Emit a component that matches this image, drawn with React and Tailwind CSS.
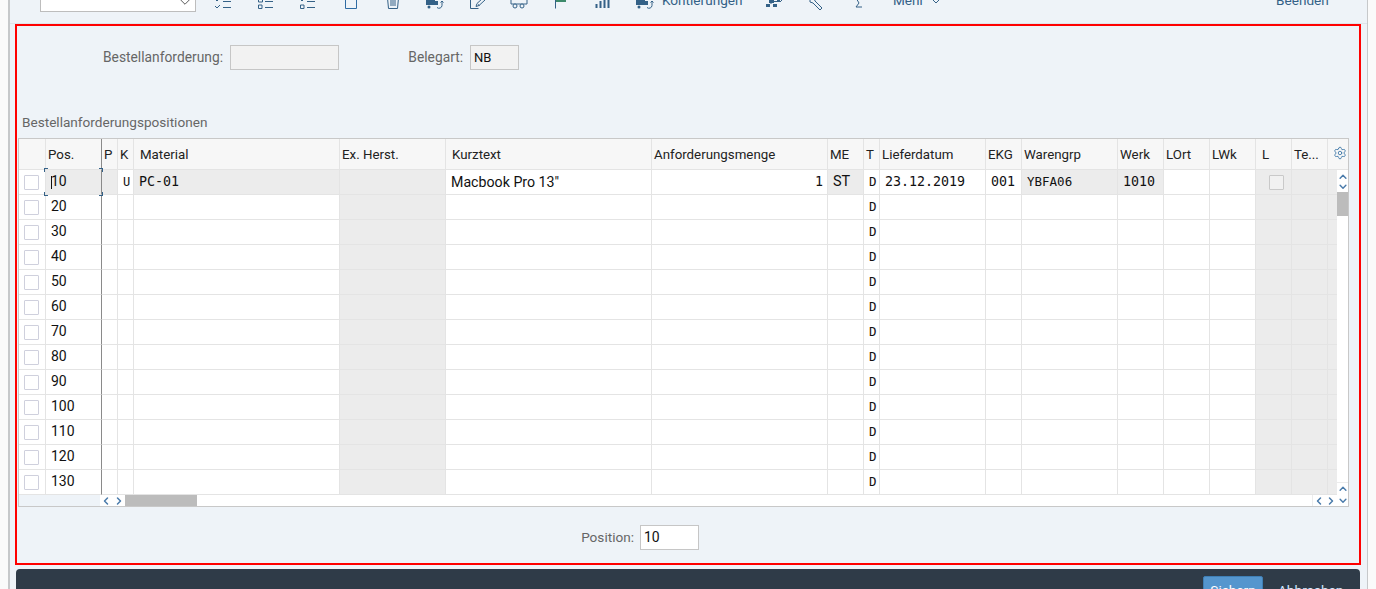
import React from 'react';
import { ChevronDown, ChevronUp, ChevronLeft, ChevronRight, Settings } from 'lucide-react';

const gridCols =
  'grid grid-cols-[27px_56px_16px_16px_206px_106px_206px_176px_36px_16px_106px_36px_96px_46px_46px_46px_36px_36px_20px]';

const headers = [
  { label: '', cls: '' },
  { label: 'Pos.', cls: 'pl-[2px] !border-r-[#8a8a8a]' },
  { label: 'P', cls: 'pl-[2px]' },
  { label: 'K', cls: 'pl-[2px]' },
  { label: 'Material', cls: 'pl-[6px]' },
  { label: 'Ex. Herst.', cls: 'pl-[2px]' },
  { label: 'Kurztext', cls: 'pl-[6px]' },
  { label: 'Anforderungsmenge', cls: 'pl-[2px]' },
  { label: 'ME', cls: 'pl-[2px]' },
  { label: 'T', cls: 'pl-[2px]' },
  { label: 'Lieferdatum', cls: 'pl-[2px]' },
  { label: 'EKG', cls: 'pl-[2px]' },
  { label: 'Warengrp', cls: 'pl-[2px]' },
  { label: 'Werk', cls: 'pl-[2px]' },
  { label: 'LOrt', cls: 'pl-[2px]' },
  { label: 'LWk', cls: 'pl-[2px]' },
  { label: 'L', cls: 'pl-[6px]' },
  { label: 'Te...', cls: 'pl-[2px]' },
];

const positions = [10, 20, 30, 40, 50, 60, 70, 80, 90, 100, 110, 120, 130];

const mono = "font-['DejaVu_Sans_Mono','Liberation_Mono',monospace]";

// icons are cut off by the top of the window, coords are page y
const Icon = ({ children }) => (
  <div className="w-[42px] h-[24px] flex justify-center shrink-0">
    <svg width="24" height="14" viewBox="0 0 24 14" fill="none" stroke="#346187" strokeWidth="1">
      {children}
    </svg>
  </div>
);

const Truck = () => (
  <>
    <rect x="3" y="-3" width="9" height="8" fill="#346187" stroke="none" />
    <rect x="12" y="1" width="3" height="4" fill="#346187" stroke="none" />
    <circle cx="6" cy="7" r="1.500" fill="#346187" stroke="none" />
    <path d="M14 7.500a3 3 0 0 0 5 -2V1M17.500 2.500L19 1l1.500 1.500" />
  </>
);

const CheckBox = ({ disabled }) => (
  <span
    className={`block w-[15px] h-[15px] border rounded-[1px] ${
      disabled ? 'border-[#c9c9c9] bg-[#f1f1f1]' : 'border-[#cfd0dd] bg-white'
    }`}
  />
);

const Row = ({ pos, index }) => {
  const first = index === 0;
  const gray = 'bg-[#ececec]';
  const cell = 'h-[25px] border-r border-b border-[#e4e4e4] flex items-center pl-[5px] overflow-hidden whitespace-nowrap';
  return (
    <div className={gridCols}>
      <div className={`${cell} bg-white`}>
        <CheckBox />
      </div>
      <div className={`${cell} !border-r-[#8a8a8a] text-[14px] pb-[2px] ${first ? gray : 'bg-white'}`}>{pos}</div>
      <div className={`${cell} ${first ? gray : 'bg-white'}`} />
      <div className={`${cell} bg-white ${mono} text-[12px]`}>{first ? 'U' : ''}</div>
      <div className={`${cell} ${mono} text-[13.3px] ${first ? gray : 'bg-white'}`}>{first ? 'PC-01' : ''}</div>
      <div className={`${cell} ${gray}`} />
      <div className={`${cell} bg-white text-[14.2px] pt-[1px]`}>{first ? 'Macbook Pro 13"' : ''}</div>
      <div className={`${cell} bg-white justify-end pr-[4px] ${mono} text-[13.3px]`}>{first ? '1' : ''}</div>
      <div className={`${cell} text-[14.500px] ${first ? gray : 'bg-white'}`}>{first ? 'ST' : ''}</div>
      <div className={`${cell} bg-white ${mono} text-[12.5px]`}>D</div>
      <div className={`${cell} bg-white ${mono} text-[13.3px]`}>{first ? '23.12.2019' : ''}</div>
      <div className={`${cell} bg-white ${mono} text-[13.3px]`}>{first ? '001' : ''}</div>
      <div className={`${cell} ${mono} text-[12.5px] ${first ? gray : 'bg-white'}`}>{first ? 'YBFA06' : ''}</div>
      <div className={`${cell} ${mono} text-[13.3px] ${first ? gray : 'bg-white'}`}>{first ? '1010' : ''}</div>
      <div className={`${cell} bg-white`} />
      <div className={`${cell} bg-white`} />
      <div className={`${cell} ${gray} justify-center`}>{first && <CheckBox disabled />}</div>
      <div className={`${cell} ${gray}`} />
      <div className={`${cell} ${gray} border-r-0`} />
    </div>
  );
};

const App = () => {
  return (
    <div className="h-[589px] overflow-hidden bg-[#fafafa] font-['Roboto',sans-serif] text-[13.6px] text-[#111]">
      <div className="ml-[8px] w-[1360px] h-full border-l-2 border-r border-[#c6c8ca] bg-[#eef3f8] flex flex-col">
        {/* Toolbar, scrolled partly out of view */}
        <div className="h-[24px] shrink-0 overflow-hidden flex items-start text-[#346187] border-b border-[#dfe5eb]">
          <div className="ml-[30px] mr-[8px] w-[156px] h-[12px] shrink-0 bg-white border border-t-0 border-[#bdbdbd] flex justify-end items-end pr-[1px]">
            <ChevronDown size={18} className="text-[#555] shrink-0" strokeWidth={1.3} />
          </div>
          <Icon>
            <path d="M2 -1l2 2 3-3M2 6l2 2 3-3M10 1.500h8M10 7.500h8" />
          </Icon>
          <Icon>
            <path d="M3.500 -2h4v4h-4zM3.500 5h3.500v3.500h-3.500zM10 1.500h8M10 7.500h8" />
          </Icon>
          <Icon>
            <path d="M3 -1l2 2 3-3M3.500 5h3.500v3.500h-3.500zM10 1.500h8M10 7.500h8" />
          </Icon>
          <Icon>
            <path d="M6.500 -2v10.500h11V-2" stroke="#2f6ba3" />
          </Icon>
          <Icon>
            <path d="M6.500 -2l1 10.500h9l1-10.500M10 -2v8M12 -2v8M14 -2v8" />
          </Icon>
          <Icon>
            <Truck />
          </Icon>
          <Icon>
            <path d="M5.500 0v8.500h8M11 6.500l1-3L18-2l2 2-6 5.500z" />
            <path d="M13 4.500l1.500 1" />
          </Icon>
          <Icon>
            <path d="M4 -3h16v7H4z" />
            <circle cx="8" cy="6" r="2" fill="#eef3f8" />
            <circle cx="15" cy="6" r="2" fill="#eef3f8" />
          </Icon>
          <Icon>
            <path d="M6.500 -2v10.500" />
            <path d="M7 -2h10v4H7z" fill="#3d8a6b" stroke="none" />
          </Icon>
          <Icon>
            <path d="M5.500 4v4M9.500 1v7M13.500 -2v10M17.500 -2v10" strokeWidth="2" />
          </Icon>
          <div className="flex items-start shrink-0 w-[130px]">
            <Icon>
              <Truck />
            </Icon>
            <span className="-ml-[4px] -mt-[10px] leading-[20px] whitespace-nowrap">Kontierungen</span>
          </div>
          <Icon>
            <path d="M6 0h5v3H6zM3 4h4v3H3zM10 4h4v3h-4zM14 0h3v2h-3z" fill="#346187" stroke="none" />
            <path d="M8 3v1M11 1.500h3" />
            <path d="M17 2l3-3" />
          </Icon>
          <Icon>
            <path d="M5 -2l2 2 2-2 1 3 7 7-2 2-7-7-3-1z" />
          </Icon>
          <Icon>
            <path d="M15 -2H9l3 5-3 4h6" />
          </Icon>
          <span className="ml-[13px] -mt-[10px] leading-[20px] w-[39px] shrink-0">Mehr</span>
          <ChevronDown size={16} className="-mt-[7px] -ml-[4px] shrink-0" strokeWidth={1.5} />
          <span className="ml-[332px] -mt-[10px] leading-[20px] shrink-0">Beenden</span>
        </div>

        {/* Red frame */}
        <div className="ml-[5px] w-[1346px] h-[541px] shrink-0 border-2 border-[#ff0000] pl-px pt-[19px]">
          <div className="flex items-center h-[25px] text-[13.8px] text-[#666]">
            <span className="w-[205px] text-right">Bestellanforderung:</span>
            <div className="ml-[7px] w-[109px] h-[25px] border border-[#c6c6c6] bg-[#f2f2f2]" />
            <span className="ml-[68px] w-[56px] text-right">Belegart:</span>
            <div className="ml-[7px] w-[49px] h-[25px] border border-[#c6c6c6] bg-[#f2f2f2] flex items-center pl-[3px] text-[#111] text-[13px]">
              NB
            </div>
          </div>

          <div className="mt-[42px] mb-[6px] h-[20px] leading-[20px] pl-[4px] text-[#666]">Bestellanforderungspositionen</div>

          {/* Table */}
          <div className="relative w-[1331px] h-[369px] border border-[#c8c8c8]">
            <div className={`${gridCols} bg-[#f7f7f7]`}>
              {headers.map((h, i) => (
                <div
                  key={i}
                  className={`h-[31px] border-r border-b border-[#e4e4e4] flex items-center pt-[2px] whitespace-nowrap overflow-hidden text-[13.3px] text-[#222] ${h.cls}`}
                >
                  {h.label}
                </div>
              ))}
              <div className="h-[31px] border-b border-[#e4e4e4] flex justify-end items-start pr-[1px] pt-[7px]">
                <Settings size={14} className="text-[#3f78a8]" strokeWidth={1.5} />
              </div>
            </div>

            {positions.map((p, i) => (
              <Row key={p} pos={p} index={i} />
            ))}

            {/* horizontal scrollbar */}
            <div className="h-[11px] flex bg-white">
              <div className="w-[81px] bg-[#eef3f8]" />
              <div className="w-[25px] flex items-center justify-between text-[#4a7bab]">
                <ChevronLeft size={12} strokeWidth={3} />
                <ChevronRight size={12} strokeWidth={3} />
              </div>
              <div className="w-[72px] bg-[#bcbcbc]" />
              <div className="w-[1115px]" />
              <div className="w-[25px] flex items-center justify-between text-[#4a7bab] border-l border-[#ececec]">
                <ChevronLeft size={12} strokeWidth={3} />
                <ChevronRight size={12} strokeWidth={3} />
              </div>
            </div>

            {/* focus brackets on the first position */}
            <div className="absolute left-[25px] top-[29px] w-[59px] h-[28px] pointer-events-none">
              <span className="absolute left-0 top-0 w-[4px] h-[4px] border-l border-t border-[#346187]" />
              <span className="absolute right-0 top-0 w-[4px] h-[4px] border-r border-t border-[#346187]" />
              <span className="absolute left-0 bottom-0 w-[4px] h-[4px] border-l border-b border-[#346187]" />
              <span className="absolute right-0 bottom-0 w-[4px] h-[4px] border-r border-b border-[#346187]" />
              <span className="absolute left-[7px] top-[8px] w-px h-[13px] bg-[#111]" />
            </div>

            {/* vertical scrollbar */}
            <div className="absolute right-0 top-[31px] bottom-0 w-[11px] bg-white flex flex-col text-[#4a7bab]">
              <div className="h-[22px] flex flex-col items-center">
                <ChevronUp size={12} strokeWidth={3} className="mt-[1px] -mb-[2px]" />
                <ChevronDown size={12} strokeWidth={3} />
              </div>
              <div className="h-[24px] bg-[#bcbcbc]" />
              <div className="flex-1" />
              <div className="h-[24px] flex flex-col items-center border-t border-[#ececec]">
                <ChevronUp size={12} strokeWidth={3} />
                <ChevronDown size={12} strokeWidth={3} />
              </div>
            </div>
          </div>

          <div className="mt-[18px] flex items-center h-[25px] text-[#666]">
            <span className="w-[616px] text-right">Position:</span>
            <div className="ml-[6px] w-[59px] h-[25px] border border-[#c6c6c6] bg-white flex items-center pl-[3px] text-[#111] text-[14px]">
              10
            </div>
          </div>
        </div>

        {/* Footer */}
        <div className="mt-[4px] ml-[6px] w-[1344px] h-[40px] shrink-0 bg-[#2f3b48] rounded-t-[4px] flex items-start justify-end pt-[7px] pr-[15px]">
          <div className="w-[60px] h-[30px] bg-[#5596ce] border border-[#3f7fb5] rounded-[2px] text-white text-center leading-[26px]">
            Sichern
          </div>
          <span className="ml-[15px] w-[67px] text-[#d1e8ff] leading-[28px] whitespace-nowrap">Abbrechen</span>
        </div>
      </div>
    </div>
  );
};

export default App;
